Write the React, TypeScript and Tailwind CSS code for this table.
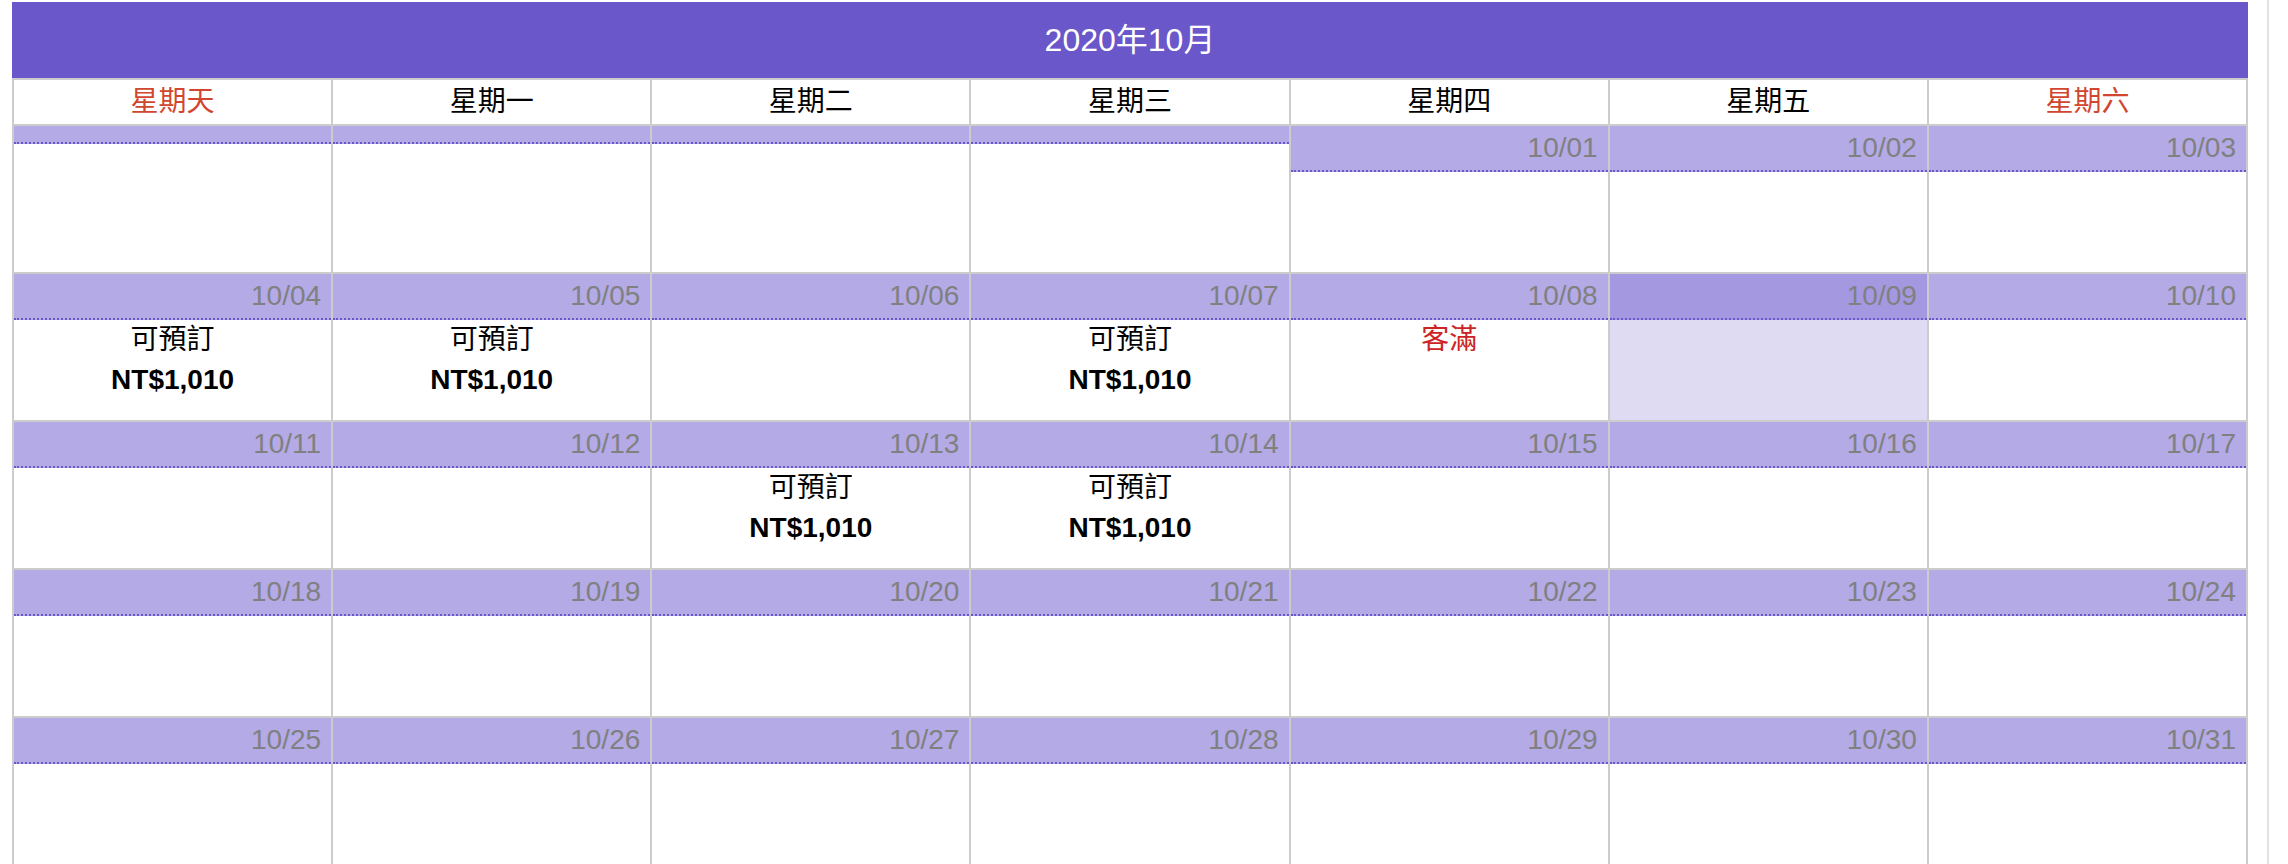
import React from "react"

const WEEKDAYS = ["星期天", "星期一", "星期二", "星期三", "星期四", "星期五", "星期六"]

type DayInfo = { status?: "open" | "full"; price?: string }

const DAYS: Record<number, DayInfo> = {
  4: { status: "open", price: "NT$1,010" },
  5: { status: "open", price: "NT$1,010" },
  7: { status: "open", price: "NT$1,010" },
  8: { status: "full" },
  13: { status: "open", price: "NT$1,010" },
  14: { status: "open", price: "NT$1,010" },
}

const SELECTED = 9
const FIRST_WEEKDAY = 4 // 2020/10/01 is a Thursday
const DAYS_IN_MONTH = 31

function pad(n: number) {
  return n < 10 ? `0${n}` : `${n}`
}

function EmptyCell() {
  return (
    <div className="bg-white h-[146px]">
      <div className="h-[18px] bg-[#b3aae6] border-b-2 border-dotted border-[#6a57c9]" />
    </div>
  )
}

function DayCell({ day }: { day: number }) {
  const info = DAYS[day]
  const selected = day === SELECTED
  return (
    <div className={`h-[146px] flex flex-col ${selected ? "bg-[#dfdbf3]" : "bg-white"}`}>
      <div
        className={`h-[46px] flex items-center justify-end pr-[10px] text-[28px] text-[#808080] border-b-2 border-dotted border-[#6a57c9] ${
          selected ? "bg-[#a498e0]" : "bg-[#b3aae6]"
        }`}
      >
        10/{pad(day)}
      </div>
      {info && (
        <div className="flex flex-col items-center text-[28px] leading-[40px]">
          {info.status === "open" ? (
            <>
              <span className="text-black">可預訂</span>
              <span className="font-bold text-black">{info.price}</span>
            </>
          ) : (
            <span className="text-[#cc2424]">客滿</span>
          )}
        </div>
      )}
    </div>
  )
}

export default function App() {
  const cells: (number | null)[] = []
  for (let i = 0; i < FIRST_WEEKDAY; i++) cells.push(null)
  for (let d = 1; d <= DAYS_IN_MONTH; d++) cells.push(d)

  return (
    <div
      className="flex bg-white min-h-[864px]"
      style={{ fontFamily: '"Liberation Sans", "Noto Sans CJK TC", sans-serif' }}
    >
      <div className="ml-[12px] mt-[2px] w-[2236px]">
        {/* Month title */}
        <div className="h-[76px] bg-[#6a57c9] flex items-center justify-center text-white text-[32px]">
          2020年10月
        </div>

        <div className="bg-[#cccccc] p-[2px] pb-0 grid grid-cols-7 gap-[2px]">
          {WEEKDAYS.map((w, i) => (
            <div
              key={w}
              className={`h-[44px] bg-white flex items-center justify-center text-[28px] ${
                i === 0 || i === 6 ? "text-[#d1462f]" : "text-black"
              }`}
            >
              {w}
            </div>
          ))}
          {cells.map((d, i) => (d === null ? <EmptyCell key={`e${i}`} /> : <DayCell key={d} day={d} />))}
        </div>
      </div>

      {/* page edge */}
      <div className="ml-[19px] w-[2px] bg-[#e2e2e2] self-stretch" />
    </div>
  )
}
